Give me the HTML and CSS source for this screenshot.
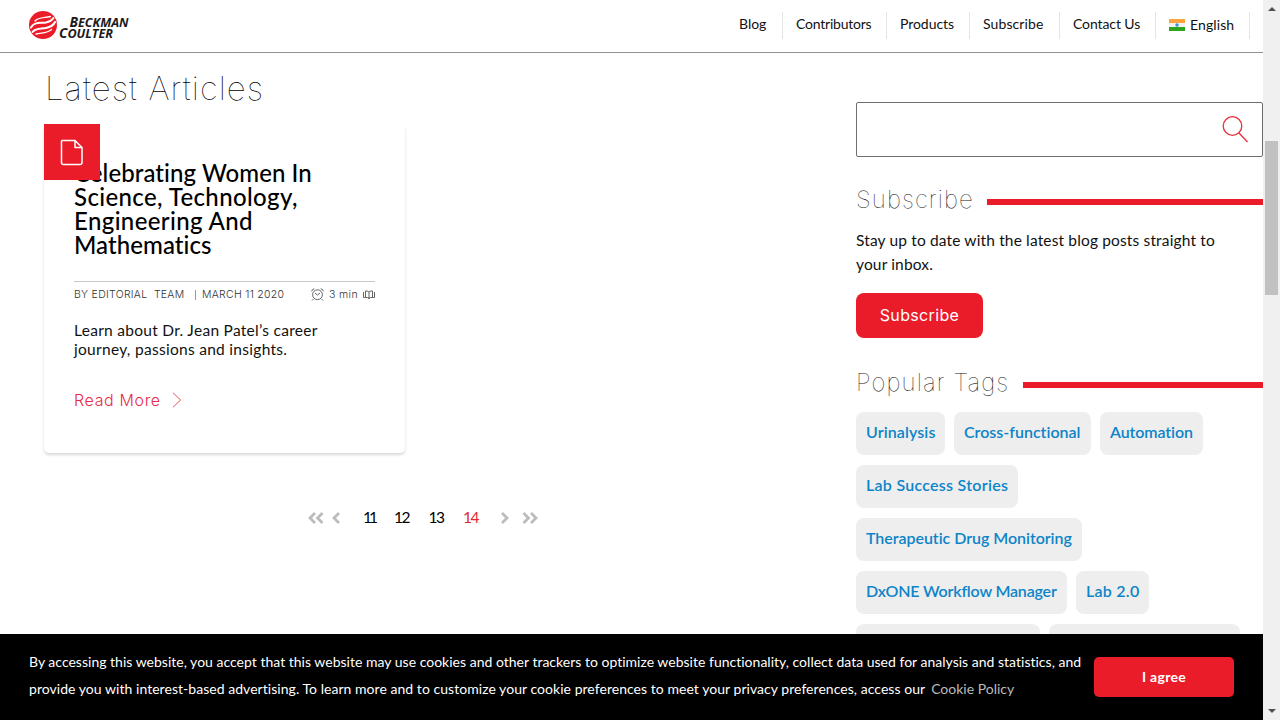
FILE: index.html
```html
<!DOCTYPE html>
<html lang="en">
<head>
<meta charset="utf-8">
<title>Latest Articles</title>
<link rel="stylesheet" href="styles.css">
</head>
<body>
<div class="window">
  <div class="page">
    <header class="header">
      <svg class="logo" width="104" height="32" viewBox="0 0 104 32">
        <circle cx="15" cy="15" r="14" fill="#eb1c2a"/>
        <g fill="none" stroke="#fff" stroke-linecap="round">
          <path stroke-width="1.300" d="M7 11C10 7.500 15 8 22.500 6.500"/>
          <path stroke-width="2" d="M3 17.500C6 11.500 12 13.500 18 12.500Q23 11.500 25.500 8"/>
          <path stroke-width="2" d="M4.500 22C8 17.500 13 19 18 18Q25 16.500 27 12"/>
          <path stroke-width="1.300" d="M8 24C14 22.500 19 23.500 23.500 19.500"/>
        </g>
        <g class="logo-text">
          <text x="41.500" y="16.500" font-size="14" textLength="59" lengthAdjust="spacingAndGlyphs">B<tspan font-size="12.800">ECKMAN</tspan></text>
          <text x="31" y="28" font-size="14" textLength="54" lengthAdjust="spacingAndGlyphs">C<tspan font-size="12.800">OULTER</tspan></text>
        </g>
      </svg>
      <nav class="nav">
        <a class="nav-item n1">Blog</a>
        <a class="nav-item n2">Contributors</a>
        <a class="nav-item n3">Products</a>
        <a class="nav-item n4">Subscribe</a>
        <a class="nav-item n5">Contact Us</a>
        <a class="nav-item nav-lang">
          <svg class="flag" width="16" height="12" viewBox="0 0 16 12">
            <path fill="#ffa33c" d="M0 0h16v4H0z"/><path fill="#f2f2f2" d="M0 4h16v4H0z"/><path fill="#2da51c" d="M0 8h16v4H0z"/><circle cx="8" cy="6" r="1.700" fill="#3a93d8"/>
          </svg>English</a>
      </nav>
    </header>
    <div class="content">
      <main class="main">
        <h1 class="title">Latest Articles</h1>
        <article class="card">
          <div class="badge">
            <svg width="24" height="27" viewBox="0 0 24 27" fill="none" stroke="#fff" stroke-width="1.500" stroke-linejoin="round"><path d="M2 1.500h13l7 7v15q0 2-2 2H3.500q-2 0-2-2V2Z"/><path d="M15 1.500v7h7"/></svg>
          </div>
          <h2 class="card-title">Celebrating Women In<br><span class="wide">Science, Technology,<br>Engineering And</span><br>Mathematics</h2>
          <div class="meta">
            <span class="author">BY EDITORIAL&nbsp; TEAM</span>
            <span class="date">MARCH 11 2020</span>
            <span class="time">
              <svg width="13" height="13" viewBox="0 0 13 13" fill="none" stroke="#555" stroke-width=".9"><circle cx="6.500" cy="6.700" r="4.900"/><path d="M4 5l2.500 2L9 5M.6 3.300Q1 1 3.300.8M12.400 3.300Q12 1 9.700.8M2.500 11l-1.500 1.500M10.500 11l1.500 1.500"/></svg>
              <span class="mins">3 min</span>
              <svg width="12" height="10" viewBox="0 0 12 10" fill="none" stroke="#555" stroke-width=".9"><path d="M6 2.200Q5.500 1 4 1H2.500V7.500H.5V2M6 2.200Q6.500 1 8 1h1.500V7.500h2V2M2.500 7.500H4.500Q6 7.500 6 9Q6 7.500 7.500 7.500h2M6 2v7"/></svg>
            </span>
          </div>
          <p class="summary">Learn about Dr. Jean Patel’s career<br>journey, passions and insights.</p>
          <a class="read-more"><span>Read More</span><svg width="10" height="16" viewBox="0 0 10 16" fill="none" stroke="#eb4b50"><path d="M1 .7 8.500 8 1 15.300"/></svg></a>
        </article>
        <div class="pager">
          <svg class="pg-first" width="16" height="12" viewBox="0 0 16 12"><path d="M7 1 2 6l5 5M14.500 1l-5 5 5 5"/></svg>
          <svg class="pg-prev" width="9" height="12" viewBox="0 0 9 12"><path d="M7 1 2 6l5 5"/></svg>
          <span class="pg pg-11">11</span><span class="pg">12</span><span class="pg">13</span><span class="pg pg-current">14</span>
          <svg class="pg-next" width="9" height="12" viewBox="0 0 9 12"><path d="M2 1l5 5-5 5"/></svg>
          <svg class="pg-last" width="16" height="12" viewBox="0 0 16 12"><path d="M1.500 1l5 5-5 5M9 1l5 5-5 5"/></svg>
        </div>
      </main>
      <aside class="side">
        <div class="search"><svg width="27" height="28" viewBox="0 0 27 28" fill="none" stroke="#e8303a" stroke-width="1.300"><circle cx="10.500" cy="11" r="9.300"/><path d="M17 18l8.500 9"/></svg></div>
        <h3 class="side-title side-title-sub"><span>Subscribe</span></h3>
        <p class="blurb">Stay up to date with the latest blog posts straight to<br>your inbox.</p>
        <a class="subscribe">Subscribe</a>
        <h3 class="side-title side-title-tags"><span>Popular Tags</span></h3>
        <div class="tags">
          <a class="tag t1">Urinalysis</a><a class="tag t2">Cross-functional</a><a class="tag t3">Automation</a>
          <a class="tag t4">Lab Success Stories</a>
          <a class="tag t5">Therapeutic Drug Monitoring</a>
          <a class="tag t6">DxONE Workflow Manager</a><a class="tag t7">Lab 2.0</a>
          <a class="tag t8"></a><a class="tag t9"></a>
        </div>
      </aside>
    </div>
    <footer class="cookies">
      <p class="cookie-text"><span class="line1">By accessing this website, you accept that this website may use cookies and other trackers to optimize website functionality, collect data used for analysis and statistics, and</span><br><span class="line2">provide you with interest-based advertising. To learn more and to customize your cookie preferences to meet your privacy preferences, access our</span><a class="policy">Cookie Policy</a></p>
      <a class="agree">I agree</a>
    </footer>
  </div>
  <div class="scrollbar"><i class="arrow-up"></i><i class="thumb"></i><i class="arrow-down"></i></div>
</div>
</body>
</html>
```

FILE: styles.css
```css
* { box-sizing: border-box; }
body { margin: 0; font-family: Lato, "Open Sans", sans-serif; font-variant-ligatures: none; color: #111; background: #fff; overflow: hidden; }
h1, h2, h3, p { margin: 0; font-weight: 400; }
svg { display: block; flex: none; }
.window { display: flex; width: 1280px; height: 720px; overflow: hidden; }
.page { display: flex; flex-direction: column; width: 1263px; height: 720px; }
.header { display: flex; justify-content: space-between; height: 53px; flex: none; border-bottom: 1px solid #929292; padding: 10px 13px 0 28px; }
.logo-text { font-family: "Open Sans", sans-serif; font-style: italic; font-weight: 700; fill: #1c1a1b; }
.nav { display: flex; padding-top: 2px; height: 29px; }
.nav-item { height: 27px; line-height: 24px; font-size: 14px; padding-left: 13px; border-right: 1px solid #e4e4e4; white-space: nowrap; }
.n1 { width: 57px; } .n2 { width: 104px; letter-spacing: -.22px; } .n3 { width: 83px; letter-spacing: -.05px; } .n4 { width: 90px; letter-spacing: .1px; } .n5 { width: 96px; letter-spacing: -.1px; }
.nav-lang { display: flex; width: 94px; line-height: 26px; letter-spacing: .1px; }
.flag { margin: 7px 5px 0 0; }
.content { display: flex; flex: 1; min-height: 0; overflow: hidden; }
.main { width: 856px; flex: none; padding-left: 44px; }
.title { font-family: Inter, sans-serif; font-weight: 100; font-size: 33px; line-height: 40px; letter-spacing: 1.050px; padding-left: 1px; margin-top: 15px; height: 56px; color: #000; }
.card { position: relative; width: 361px; height: 329px; padding: 37px 30px 0; border-radius: 5px; box-shadow: 0 2px 3px rgba(0,0,0,.15); }
.badge { position: absolute; left: 0; top: 0; width: 56px; height: 56px; background: #eb1c2a; display: flex; align-items: center; justify-content: center; }
.card-title { font-size: 24px; line-height: 24px; font-weight: 500; letter-spacing: .07px; color: #000; height: 120px; }
.wide { letter-spacing: .38px; }
.meta { display: flex; height: 26px; border-top: 1px solid #c8c8c8; font-family: Inter, sans-serif; font-weight: 300; font-size: 10.500px; line-height: 26px; letter-spacing: .28px; color: #333; white-space: nowrap; }
.author { width: 121px; }
.date { width: 116px; padding-left: 7px; background: linear-gradient(#76a7b5, #76a7b5) 0 8px / 1px 10px no-repeat; }
.time { display: flex; align-items: center; flex: 1; justify-content: space-between; }
.mins { letter-spacing: .4px; }
.summary { font-size: 15.500px; line-height: 19px; letter-spacing: .29px; margin-top: 14px; height: 68px; white-space: nowrap; }
.read-more { display: flex; align-items: center; gap: 11px; font-family: Inter, sans-serif; font-size: 16px; font-weight: 300; line-height: 22px; letter-spacing: .65px; color: #e82a43; }
.pager { display: flex; align-items: center; height: 24px; margin: 53px 0 0 264px; font-size: 15.500px; letter-spacing: -1.600px; color: #000; }
.pager svg { fill: none; stroke: #bcbcbc; stroke-width: 2.800; }
.pg-prev { margin-left: 8px; }
.pg { width: 34.500px; line-height: 22px; height: 24px; }
.pg-11 { width: 31px; margin-left: 22px; letter-spacing: -3px; }
.pg-current { color: #e32930; width: 37px; }
.pg-last { margin-left: 13px; }
.side { width: 407px; flex: none; padding-top: 49px; }
.search { display: flex; justify-content: flex-end; height: 55px; border: 1px solid #6e6e6e; border-radius: 2px; padding: 12px 13px 0 0; }
.side-title { display: flex; align-items: center; font-family: Inter, sans-serif; font-size: 24px; font-weight: 100; line-height: 30px; letter-spacing: 1.100px; color: #111; white-space: nowrap; }
.side-title::after { content: ""; flex: 1; height: 6px; margin-top: 4px; background: #eb1c2a; }
.side-title-sub { margin-top: 28px; }
.side-title-sub span { width: 131px; }
.side-title-tags { margin-top: 30px; }
.side-title-tags span { width: 167px; }
.blurb { font-size: 15.500px; line-height: 24px; letter-spacing: .15px; margin-top: 13px; white-space: nowrap; }
.subscribe { display: flex; justify-content: center; width: 127px; height: 45px; margin-top: 17px; border-radius: 8px; background: #eb1c2a; color: #fff; font-family: Inter, sans-serif; font-size: 16px; line-height: 44px; letter-spacing: .35px; }
.tags { display: flex; flex-wrap: wrap; gap: 10px 9px; margin-top: 14px; width: 390px; }
.tag { height: 43px; padding-left: 10px; line-height: 40px; border-radius: 8px; background: #eee; color: #0d84c8; font-size: 16px; font-weight: 600; white-space: nowrap; }
.t1 { width: 89px; letter-spacing: .1px; } .t2 { width: 137px; } .t3 { width: 103px; letter-spacing: -.1px; }
.t4 { width: 162px; margin-right: 200px; letter-spacing: .27px; } .t5 { width: 226px; margin-right: 150px; letter-spacing: -.04px; }
.t6 { width: 211px; letter-spacing: -.18px; } .t7 { width: 73px; letter-spacing: .25px; } .t8 { width: 184px; } .t9 { width: 191px; }
.cookies { display: flex; height: 86px; flex: none; background: #000; color: #fff; padding: 14px 29px 0; }
.cookie-text { width: 1065px; font-size: 14px; line-height: 27px; white-space: nowrap; }
.line1 { letter-spacing: .01px; }
.line2 { letter-spacing: .042px; }
.policy { color: #bbb; margin-left: 6px; }
.agree { width: 140px; height: 40px; margin-top: 9px; border-radius: 5px; background: #eb1c2a; font-size: 14px; font-weight: 700; line-height: 40px; letter-spacing: .3px; text-align: center; }
.scrollbar { width: 17px; background: #f0f0f0; display: flex; flex-direction: column; align-items: center; }
.arrow-up { border: 4px solid transparent; border-top: 0; border-bottom-color: #505050; margin-top: 7px; }
.thumb { width: 13px; height: 154px; margin-top: 130px; background: #c1c1c1; }
.arrow-down { border: 4px solid transparent; border-bottom: 0; border-top-color: #505050; margin-top: auto; margin-bottom: 7px; }
```
